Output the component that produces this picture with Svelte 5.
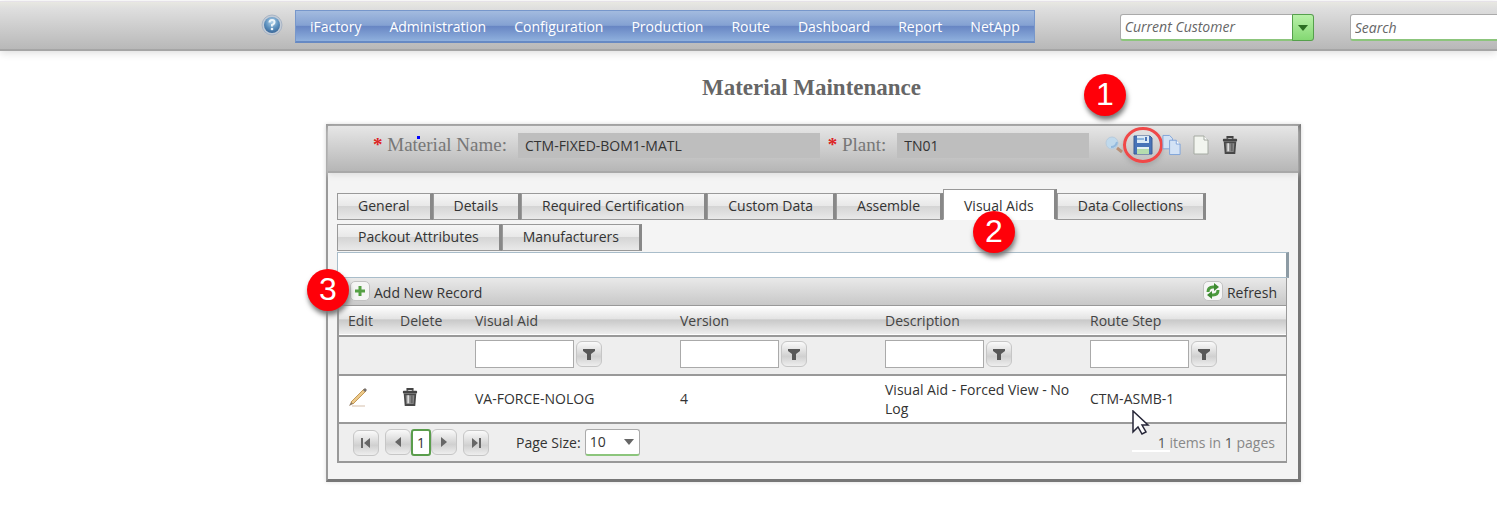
<script>
  const menu = ['iFactory', 'Administration', 'Configuration', 'Production', 'Route', 'Dashboard', 'Report', 'NetApp'];
  const tabs = ['General', 'Details', 'Required Certification', 'Custom Data', 'Assemble', 'Visual Aids', 'Data Collections', 'Packout Attributes', 'Manufacturers'];
  const columns = ['Visual Aid', 'Version', 'Description', 'Route Step'];
  let active = $state('Visual Aids');
</script>

{#snippet trash()}
  <svg width="16" height="18" viewBox="0 0 18 20" aria-hidden="true">
    <path d="M6 3V1h6v2" fill="none" stroke="#444" stroke-width="2" />
    <rect x="1" y="3" width="16" height="3" rx="1" fill="#444" />
    <path d="M3 7h12l-1 12H4z" fill="#888" stroke="#484848" stroke-width="2" />
    <path d="M7 8v9" stroke="#ddd" stroke-width="2" /><path d="M11 8v9" stroke="#666" stroke-width="2" />
  </svg>
{/snippet}

{#snippet pageButton(label, path)}
  <button class="square" aria-label={label}>
    <svg width="14" height="14" viewBox="0 0 14 14" aria-hidden="true"><path d={path} fill="#666" /></svg>
  </button>
{/snippet}

<div class="page">
  <header>
    <button class="plain help" aria-label="Help">
      <svg width="22" height="22" viewBox="0 0 22 22">
        <defs>
          <radialGradient id="globe" cx="0.5" cy="0.3" r="0.7">
            <stop offset="0" stop-color="#b4d4ea" /><stop offset="0.6" stop-color="#5b8fbd" /><stop offset="1" stop-color="#3a6798" />
          </radialGradient>
        </defs>
        <circle cx="11" cy="11" r="10" fill="#c3cbd6" stroke="#a9b5c5" />
        <circle cx="11" cy="11" r="8" fill="url(#globe)" />
        <path d="M8.500 8.500q0-2.500 2.500-2.500t2.500 2q0 2-2.500 3v1.500" fill="none" stroke="#eef5fa" stroke-width="2" />
        <circle cx="11" cy="15" r="1.300" fill="#eef5fa" />
      </svg>
    </button>
    <nav>
      {#each menu as item}<a href="#{item}">{item}</a>{/each}
    </nav>
    <div class="customer">
      <select aria-label="Customer"><option>Current Customer</option></select>
      <span class="drop"><svg width="10" height="6" viewBox="0 0 10 6"><path d="M0 0h10L5 6z" fill="#2b6e22" /></svg></span>
    </div>
    <input class="search" placeholder="Search" aria-label="Search" />
  </header>

  <main>
    <h1>Material Maintenance</h1>
    <section class="panel">
      <div class="record">
        <label for="name"><b>*</b> Material Name:<i class="dot"></i></label>
        <input id="name" class="name" value="CTM-FIXED-BOM1-MATL" />
        <label for="plant"><b>*</b> Plant:</label>
        <input id="plant" class="plant" value="TN01" />
        <div class="tools">
          <button class="plain" aria-label="Find">
            <svg width="20" height="20" viewBox="0 0 20 20"><circle cx="8" cy="8" r="6" fill="#c0d9ec" stroke="#b7cbdc" /><path d="M7 12q5 0 6-5" stroke="#93b9dd" stroke-width="2" fill="none" /><path d="M13 13l5 4" stroke="#b98f75" stroke-width="3" /></svg>
          </button>
          <button class="plain save" aria-label="Save">
            <svg width="20" height="20" viewBox="0 0 20 20"><path d="M1 1h16l2 2v16H1z" fill="#4873b8" stroke="#3a5d94" /><path d="M4 1h12v7H4z" fill="#dceaf6" /><path d="M4 4h7" stroke="#8fb5dc" stroke-width="2" /><rect x="12" y="2" width="2" height="4" fill="#4873b8" /><path d="M4 12h12v7H4z" fill="#b5dcae" /><path d="M4 12h12v2H4z" fill="#e5f1f4" /></svg>
            <span class="ring"></span>
            <span class="badge one">1</span>
          </button>
          <button class="plain" aria-label="Copy">
            <svg width="22" height="22" viewBox="0 0 22 22"><g fill="#d3e2f5" stroke="#7fa4d9"><path d="M2 1h7l3 3v11H2z" /><path d="M9 6h7l4 4v11H9z" /><path d="M16 6v4h4" fill="#fff" /></g></svg>
          </button>
          <button class="plain" aria-label="New">
            <svg width="18" height="20" viewBox="0 0 18 20"><path d="M2 1h10l4 4v14H2z" fill="#f2f5ef" stroke="#a5aaa2" /><path d="M12 1v4h4" fill="#fff" stroke="#a5aaa2" /></svg>
          </button>
          <button class="plain" aria-label="Delete material">{@render trash()}</button>
        </div>
      </div>

      <div class="body">
        <div class="tabs" role="tablist">
          {#each tabs as tab}
            <button role="tab" class="tab" class:active={tab === active} aria-selected={tab === active} onclick={() => (active = tab)}>
              {tab}{#if tab === 'Visual Aids'}<span class="badge two">2</span>{/if}
            </button>
          {/each}
        </div>
        <div class="strip"></div>
        <div class="grid">
          <div class="commands">
            <span class="badge three">3</span>
            <button class="plain command">
              <span class="mini"><svg width="12" height="12" viewBox="0 0 12 12"><path d="M6 1v10M1 6h10" stroke="#55a044" stroke-width="3" /></svg></span>Add New Record
            </button>
            <button class="plain command">
              <span class="mini"><svg width="16" height="16" viewBox="0 0 16 16"><g fill="none" stroke="#4c9a3e" stroke-width="3"><path d="M3 9q0-5 5-5h2" /><path d="M13 7q0 5-5 5H6" /></g><path d="M9 0l5 4-5 4zM7 8l-5 4 5 4z" fill="#3e8a32" /></svg></span>Refresh
            </button>
          </div>
          <table>
            <colgroup><col class="edit" /><col class="delete" /><col /><col /><col /><col /></colgroup>
            <thead>
              <tr class="titles"><th>Edit</th><th>Delete</th>{#each columns as column}<th>{column}</th>{/each}</tr>
              <tr class="filters">
                <td></td><td></td>
                {#each columns as column}
                  <td>
                    <div class="filter">
                      <input aria-label="Filter {column}" />
                      <button class="square" aria-label="Apply {column} filter"><svg width="12" height="12" viewBox="0 0 12 12"><path d="M0 1h12v2L8 6v6H4V6L0 3z" fill="#585858" /></svg></button>
                    </div>
                  </td>
                {/each}
              </tr>
            </thead>
            <tbody>
              <tr>
                <td>
                  <button class="plain" aria-label="Edit">
                    <svg width="20" height="20" viewBox="0 0 20 20"><path d="M4 19h13" stroke="#eadfd5" stroke-width="2" /><path d="M3 15L16 2l2 2L5 17z" fill="#ecc98a" stroke="#c49a58" /><path d="M15 3l2-2 2 2-2 2z" fill="#77706c" /><path d="M3 15l-2 4 4-2z" fill="#8f7a60" /></svg>
                  </button>
                </td>
                <td><button class="plain bin" aria-label="Delete">{@render trash()}</button></td>
                <td>VA-FORCE-NOLOG</td>
                <td>4</td>
                <td>Visual Aid - Forced View - No Log</td>
                <td class="step">CTM-ASMB-1
                  <svg class="pointer" width="38" height="42" viewBox="0 0 38 42" aria-hidden="true"><path d="M0 40h38v2H0z" fill="#fff" /><path d="M1 1v21l5-5 4 7 4-2-4-7h6z" fill="#fff" stroke="#262638" stroke-width="1.500" /></svg>
                </td>
              </tr>
            </tbody>
          </table>
          <div class="pager">
            {@render pageButton('First page', 'M2 2h2v10H2zM11 2v10L5 7z')}
            <div class="group">
              {@render pageButton('Previous page', 'M10 2v10L4 7z')}
              <button class="current">1</button>
              {@render pageButton('Next page', 'M4 2v10l6-5z')}
            </div>
            {@render pageButton('Last page', 'M10 2h2v10h-2zM3 2v10l6-5z')}
            <label for="size">Page Size:</label>
            <div class="size">
              <select id="size"><option>10</option></select>
              <svg width="10" height="6" viewBox="0 0 10 6"><path d="M0 0h10L5 6z" fill="#666" /></svg>
            </div>
            <span class="count"><em>1</em> items in <em>1</em> pages</span>
          </div>
        </div>
      </div>
    </section>
  </main>
</div>

<style>
  :global(body) { background: #fff; }
  .page { font: 14px/20px "Open Sans", "Noto Sans", sans-serif; color: #444; overflow: hidden; padding-bottom: 31px; }
  .page * { box-sizing: border-box; }
  button, input, select { font: inherit; color: inherit; margin: 0; }
  .plain { border: 0; padding: 0; background: none; display: inline-flex; align-items: center; justify-content: center; position: relative; }

  header { height: 50px; margin-top: 1px; display: flex; align-items: flex-start; padding: 8px 0 0 261px; border-top: 1px solid #e6e2e8; border-bottom: 2px solid #a5a5a5; background: linear-gradient(#e8e8e2, #dedede 15%, #b8b8b8); box-shadow: 0 2px 8px #ddd; }
  .help { margin: 4px 12px 0 0; flex: none; }
  nav { display: flex; flex: none; height: 33px; padding: 0; border: 1px solid #7797cb; border-bottom: 2px solid #6689c3; background: linear-gradient(#a3bbdf, #84a1d2 48%, #6785c3 50%, #8fb0dd); }
  nav a { color: #fff; text-decoration: none; padding: 6px 14px; line-height: 20px; }
  .customer { position: relative; flex: none; width: 194px; height: 27px; margin: 4px 36px 0 85px; }
  .customer select { appearance: none; width: 100%; height: 100%; border: 1px solid #aaa; border-bottom: 2px solid #8cc57c; border-radius: 3px; background: #fff; padding: 0 26px 0 4px; font-style: italic; color: #666; }
  .drop { position: absolute; right: 0; top: 0; width: 22px; height: 27px; display: grid; place-items: center; border: 1px solid #55a04c; border-radius: 0 3px 3px 0; background: linear-gradient(#b9f1a9, #84d873); pointer-events: none; }
  .search { flex: none; width: 194px; height: 27px; margin-top: 4px; border: 1px solid #aaa; border-bottom: 2px solid #8cc57c; border-radius: 3px; background: #fff; padding: 0 4px; font-style: italic; }
  .search::placeholder { color: #666; opacity: 1; }

  main { margin: 0 196px 0 326px; }
  h1 { margin: 0; padding: 24px 4px 23px 0; font: bold 23px/26px "Liberation Serif", serif; color: #666; text-align: center; }
  .panel { border: 2px solid #999; border-right: 3px solid #777; border-bottom: 3px solid #777; background: #f4f4f4; box-shadow: 0 0 4px #ddd; }
  .record { display: flex; align-items: flex-start; height: 47px; padding: 7px 0 0 45px; border-bottom: 2px solid #a8a8a8; background: linear-gradient(#e6e6e6, #b6b6b6); box-shadow: 0 2px 6px #ddd; }
  .record label { position: relative; font: 19px/24px "Liberation Serif", serif; color: #777; white-space: nowrap; margin-right: 11px; }
  .record label b { color: #d22; }
  .dot { position: absolute; left: 44px; top: 3px; width: 3px; height: 3px; background: #00f; }
  .record input { min-width: 0; height: 25px; border: 0; background: #bebebe; padding: 0 7px; color: #333; }
  .name { flex: 288; margin-right: 8px; }
  .plant { flex: 178; }
  .tools { display: flex; align-items: center; gap: 8px; margin: 1px 58px 0 14px; }
  .tools .plain { width: 21px; height: 22px; }
  .ring { position: absolute; left: -9px; top: -7px; width: 40px; height: 36px; border: 3px solid #f04848; border-radius: 50%; box-shadow: 0 3px 4px #9999; }
  .badge { position: absolute; z-index: 2; width: 42px; height: 42px; border-radius: 50%; background: #ff0009; color: #fff; font: 32px/41px "Liberation Sans", sans-serif; text-align: center; box-shadow: 1px 4px 5px #777; }
  .one { left: -48px; top: -60px; }
  .two { left: 29px; top: 21px; }
  .three { left: -32px; top: -9px; }

  .body { padding: 16px 9px 16px 9px; }
  .tabs { display: flex; flex-wrap: wrap; align-items: flex-end; row-gap: 4px; }
  .tab { position: relative; height: 27px; padding: 0 20px 2px; border: 1px solid #999; border-right: 3px solid #888; background: linear-gradient(#f6f6f6, #e8e8e8 48%, #d5d5d5 50%, #e9e9e9); color: #333; }
  .tab.active { height: 31px; background: #fff; border-bottom-color: #fff; padding-top: 4px; }
  .strip { height: 26px; margin-top: 1px; border: 1px solid #a9bdca; border-right: 3px solid #8d9ba4; background: #fff; }
  .grid { margin-right: 2px; border: 1px solid #999; border-top: 0; border-bottom-width: 2px; border-left-width: 2px; background: #eee; }
  .commands { position: relative; display: flex; justify-content: space-between; height: 28px; padding: 0 9px 0 11px; border-bottom: 1px solid #999; background: linear-gradient(#e9e9e9, #c8c8c8); }
  .command { gap: 4px; padding-top: 3px; color: #333; }
  .mini { display: grid; place-items: center; width: 20px; height: 20px; margin-top: -4px; border: 1px solid #c2c2c2; border-radius: 5px; background: #f5f5f5; }

  table { width: 100%; table-layout: fixed; border-collapse: collapse; }
  .edit { width: 52px; }
  .delete { width: 75px; }
  th, td { text-align: left; font-weight: normal; padding: 0 0 0 9px; }
  .titles { height: 30px; background: linear-gradient(#fff, #e4e4e4 45%, #c9c9c9 50%, #eee); border-bottom: 2px solid #999; }
  .filters { height: 39px; border-bottom: 2px solid #999; }
  .filters td { padding-bottom: 3px; }
  .filter { display: flex; align-items: center; gap: 2px; }
  .filter input { width: 99px; height: 28px; border: 1px solid #aaa; background: #fff; }
  .square { display: inline-grid; place-items: center; width: 26px; height: 26px; padding: 0; border: 1px solid #c6c6c6; border-radius: 6px; background: linear-gradient(#fafafa, #d0d0d0 60%, #eee); }
  tbody tr { height: 48px; background: #fff; border-bottom: 2px solid #999; }
  tbody td { color: #333; }
  tbody td:nth-child(5) { line-height: 19px; padding-right: 8px; }
  .bin { padding-left: 2px; }
  .step { position: relative; }
  .pointer { position: absolute; left: 51px; top: 34px; }

  .pager { display: flex; align-items: center; height: 37px; padding: 0 11px 0 14px; color: #333; }
  .group { display: flex; margin: 0 6px; }
  .current { width: 20px; height: 27px; padding: 0; border: 2px solid #5a9d4c; border-radius: 3px; background: #fff; }
  .pager label { margin: 0 4px 0 27px; }
  .size { position: relative; width: 55px; height: 27px; }
  .size select { appearance: none; width: 100%; height: 100%; padding: 0 4px; border: 1px solid #aaa; border-bottom: 2px solid #8cc57c; border-radius: 3px; background: #fff; }
  .size svg { position: absolute; right: 6px; top: 10px; pointer-events: none; }
  .count { margin-left: auto; color: #888; }
  .count em { font-style: normal; color: #555; }
</style>
